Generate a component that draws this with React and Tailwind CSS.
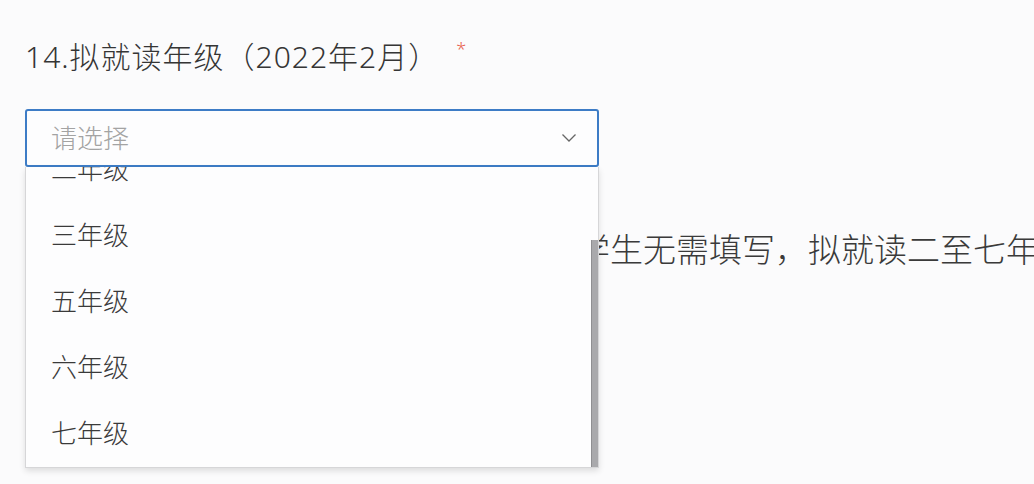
import React from 'react';

const options = ['二年级', '三年级', '五年级', '六年级', '七年级'];

export default function App() {
  return (
    <div className="relative h-[484px] w-[1034px] overflow-hidden bg-[#fbfbfc] font-['Noto_Sans','Noto_Sans_CJK_SC',sans-serif] font-light text-[#333]">
      {/* question title */}
      <div className="flex items-start pl-[25px] pt-[37px]">
        <h2 className="text-[30px] leading-[40px] font-light tracking-[1px] text-[#353535]">14.拟就读年级（2022年2月）</h2>
        <span className="ml-[17px] mt-[2px] text-[18px] leading-[20px] text-[#e8614f]">*</span>
      </div>

      {/* select */}
      <div className="relative ml-[25px] mt-[32px] w-[574px]">
        <div className="flex h-[58px] items-center justify-between rounded-[3px] border-2 border-[#3d7cc6] bg-[#fdfdfe] pl-[24px] pr-[20px]">
          <span className="text-[26px] leading-none text-[#a3a3a3]">请选择</span>
          <svg width="16" height="10" viewBox="0 0 16 10" fill="none">
            <polyline points="1.5,1.5 8,8 14.5,1.5" stroke="#666" strokeWidth="1.3" />
          </svg>
        </div>

        {/* dropdown menu */}
        <div className="absolute left-0 top-full z-10 h-[301px] w-full overflow-hidden border-x border-b border-[#d6d6d8] bg-[#fdfdfe] shadow-[0_3px_6px_rgba(0,0,0,0.12)]">
          <ul className="-mt-[31px]">
            {options.map((o) => (
              <li key={o} className="flex h-[66px] items-center pl-[25px] text-[26px] text-[#3a3a3a]">
                {o}
              </li>
            ))}
          </ul>
          <div className="absolute right-0 top-[73px] bottom-0 w-[7px] border-l border-[#8f8f92] bg-[#a9a9ac]" />
        </div>
      </div>

      {/* hint text under the dropdown */}
      <p className="ml-[82px] mt-[61px] whitespace-nowrap text-[33px] leading-[44px] text-[#3a3a3a]">
        说明：拟就读一年级的新生和在读学生无需填写，拟就读二至七年级的学生请填写
      </p>
    </div>
  );
}
